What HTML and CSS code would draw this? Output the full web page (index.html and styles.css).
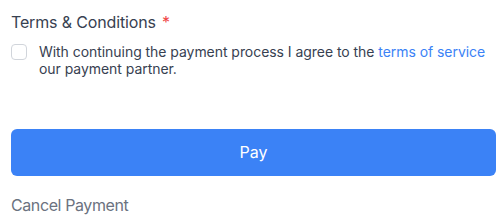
FILE: index.html
```html
<!DOCTYPE html>
<html lang="en">
<head>
<meta charset="utf-8">
<title>Terms</title>
<link rel="stylesheet" href="styles.css">
</head>
<body>
<div class="panel">
  <div class="label">Terms &amp; Conditions <span class="req">*</span></div>
  <label class="agree">
    <span class="box"></span>
    <span class="agree-text">With continuing the payment process I agree to the <a class="link" href="#">terms of service</a> our payment partner.</span>
  </label>
  <button class="pay" type="button">Pay</button>
  <div class="cancel">Cancel Payment</div>
</div>
</body>
</html>
```
FILE: styles.css
```css
* { box-sizing: border-box; }
html, body { margin: 0; padding: 0; background: #ffffff; }
body { font-family: Inter, "Noto Sans", "Liberation Sans", sans-serif; }
.panel {
  padding: 9.5px 8px 0 11px;
  display: flex;
  flex-direction: column;
}
.label {
  font-size: 16px;
  line-height: 24px;
  color: #374151;
  letter-spacing: -0.15px;
}
.req { color: #ef4444; margin-left: 2px; }
.agree {
  margin-top: 9.4px;
  display: flex;
  align-items: flex-start;
  gap: 12px;
}
.box {
  flex: none;
  width: 16px;
  height: 16px;
  margin-top: 1px;
  border: 1px solid #d1d5db;
  border-radius: 4px;
  background: #fff;
}
.agree-text {
  font-size: 14px;
  line-height: 17.5px;
  color: #374151;
  letter-spacing: -0.05px;
}
.link { color: #3b82f6; text-decoration: none; }
.pay {
  margin-top: 51px;
  height: 47px;
  width: 100%;
  border: 0;
  border-radius: 6px;
  background: #3b82f6;
  color: #fff;
  font-family: inherit;
  font-size: 16px;
}
.cancel {
  margin-top: 17px;
  font-size: 16px;
  line-height: 24px;
  color: #6b7280;
  letter-spacing: -0.4px;
}
```
